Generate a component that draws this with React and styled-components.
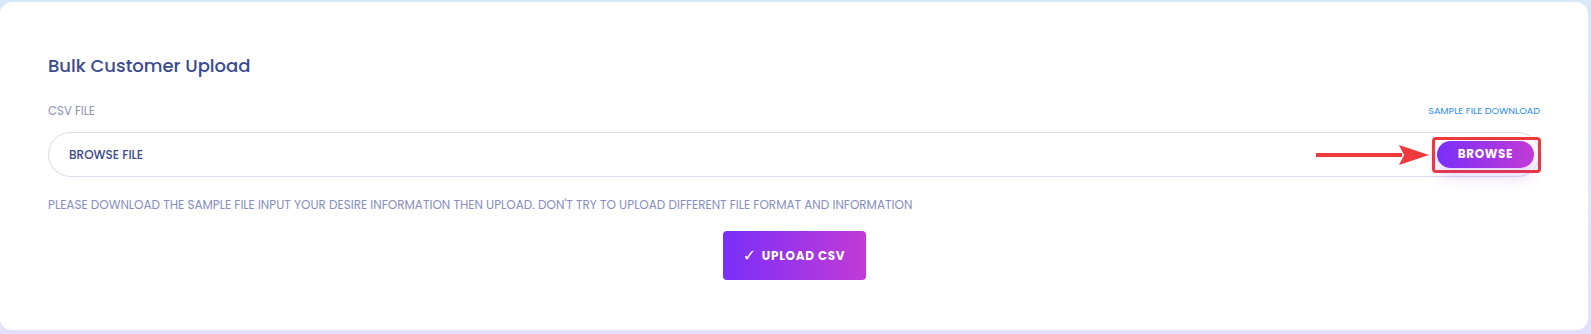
import React from 'react'
import styled, { createGlobalStyle } from 'styled-components'

const GlobalStyle = createGlobalStyle`
  html, body {
    margin: 0;
    padding: 0;
  }
  body {
    font-family: Poppins, Inter, 'Open Sans', sans-serif;
    background: linear-gradient(180deg, #d8e8f9 0%, #dfe6fa 60%, #e4e0fb 100%);
    height: 334px;
    overflow: hidden;
  }
`

const Page = styled.div`
  padding: 2px 3px 4px 0;
  height: 334px;
  box-sizing: border-box;
`

const Card = styled.div`
  background: #fff;
  border-radius: 12px;
  height: 328px;
  box-sizing: border-box;
  padding: 50px 48px 0;
  display: flex;
  flex-direction: column;
`

const Title = styled.h4`
  margin: 0;
  font-size: 18px;
  line-height: 28px;
  font-weight: 500;
  color: #3c4a8e;
`

const LabelRow = styled.div`
  margin-top: 23px;
  display: flex;
  justify-content: space-between;
  align-items: center;
  line-height: 16px;
`

const Label = styled.span`
  font-size: 11.7px;
  color: #8c93b6;
`

const SampleLink = styled.a`
  font-size: 9.6px;
  color: #2d8cf0;
  text-decoration: none;
  cursor: pointer;
`

const FileField = styled.div`
  margin-top: 13px;
  height: 45px;
  box-sizing: border-box;
  border: 1px solid #dcd9ec;
  border-radius: 999px;
  padding-left: 20px;
  display: flex;
  align-items: center;
`

const FileText = styled.span`
  flex: 1;
  font-size: 12px;
  font-weight: 500;
  color: #3c4a8e;
`

const Arrow = styled.svg`
  display: block;
  margin-right: 2px;
`

const Highlight = styled.span`
  display: flex;
  border: 3px solid #ef3a3d;
  border-radius: 4px;
  padding: 1px 4px 2px 2px;
  margin-right: -2px;
`

const BrowseButton = styled.button`
  width: 97px;
  height: 27px;
  border: none;
  border-radius: 999px;
  background: linear-gradient(90deg, #7a2ff8 0%, #c23bd6 100%);
  color: #fff;
  font-family: inherit;
  font-size: 12px;
  font-weight: 700;
  letter-spacing: 0.6px;
  box-shadow: 0 8px 16px rgba(122, 47, 248, 0.22);
  cursor: pointer;
`

const Hint = styled.p`
  margin: 20px 0 0;
  font-size: 12px;
  line-height: 16px;
  color: #878ebf;
`

const UploadButton = styled.button`
  align-self: center;
  margin-top: 18px;
  width: 143px;
  height: 49px;
  border: none;
  border-radius: 4px;
  background: linear-gradient(90deg, #7a2ff8 0%, #c23bd6 100%);
  color: #fff;
  font-family: inherit;
  font-size: 12px;
  font-weight: 700;
  letter-spacing: 0.7px;
  display: flex;
  align-items: center;
  justify-content: center;
  gap: 5px;
  cursor: pointer;
`

const Check = styled.span`
  font-family: 'DejaVu Sans', sans-serif;
  font-weight: 400;
  font-size: 16px;
  line-height: 1;
`

export default function App() {
  return (
    <Page>
      <GlobalStyle />
      <Card>
        <Title>Bulk Customer Upload</Title>
        <LabelRow>
          <Label>CSV FILE</Label>
          <SampleLink>SAMPLE FILE DOWNLOAD</SampleLink>
        </LabelRow>
        <FileField>
          <FileText>BROWSE FILE</FileText>
          <Arrow width="114" height="22" viewBox="0 0 114 22">
            <rect x="0" y="9" width="86" height="4" fill="#ef3a3d" />
            <path d="M83 1 L113 11 L83 21 L88 11 Z" fill="#ef3a3d" />
          </Arrow>
          <Highlight>
            <BrowseButton>BROWSE</BrowseButton>
          </Highlight>
        </FileField>
        <Hint>
          PLEASE DOWNLOAD THE SAMPLE FILE INPUT YOUR DESIRE INFORMATION THEN UPLOAD. DON'T TRY TO UPLOAD DIFFERENT FILE FORMAT AND INFORMATION
        </Hint>
        <UploadButton>
          <Check>✓</Check>
          UPLOAD CSV
        </UploadButton>
      </Card>
    </Page>
  )
}
